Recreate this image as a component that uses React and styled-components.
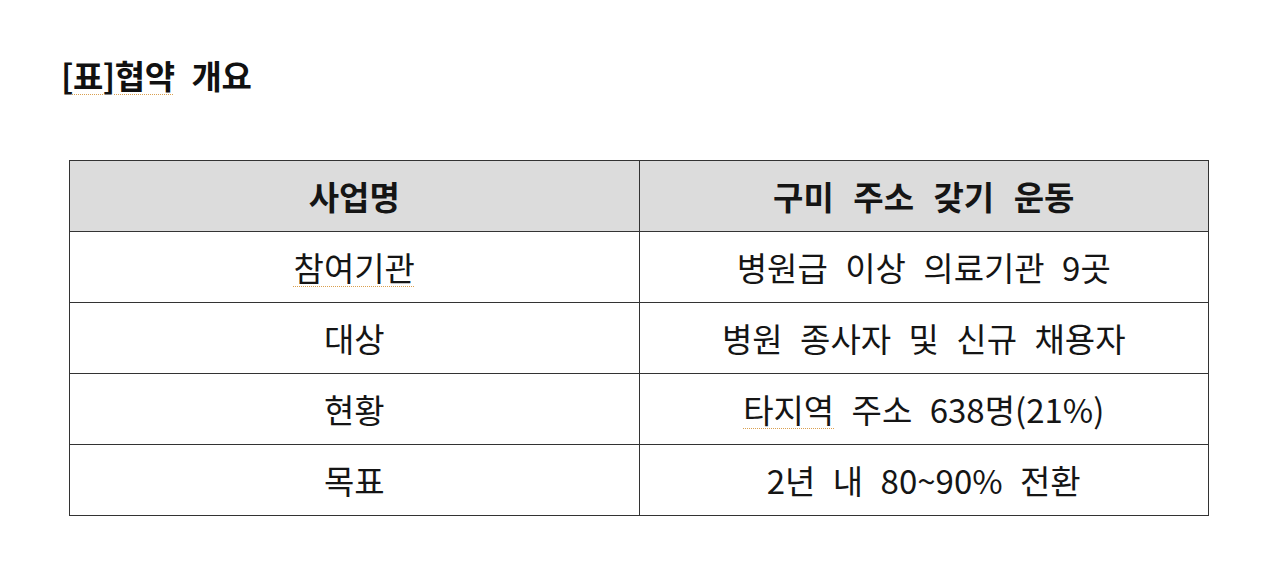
import React from "react";
import styled, { createGlobalStyle } from "styled-components";

const Global = createGlobalStyle`
  html, body {
    margin: 0;
    padding: 0;
    background: #fff;
  }
  body {
    font-family: "Noto Sans CJK KR", "Noto Sans", sans-serif;
    color: #111;
  }
`;

const Page = styled.div`
  width: 1280px;
  height: 575px;
  box-sizing: border-box;
  padding: 52px 0 0 61px;
`;

const Title = styled.h2`
  margin: 0;
  font-size: 33px;
  font-weight: 700;
  line-height: 46px;
  word-spacing: 10px;
  letter-spacing: -0.5px;
`;

const Spell = styled.span`
  text-decoration: underline dotted #d9a050;
  text-underline-offset: 5px;
  text-decoration-thickness: 1px;
`;

const Table = styled.table`
  margin: 62px 0 0 8px;
  width: 1140px;
  border-collapse: collapse;
  table-layout: fixed;
`;

const Cell = styled.td`
  height: 70px;
  padding: 0;
  border: 1px solid #333;
  text-align: center;
  font-size: 33px;
  font-weight: ${(p) => (p.$head ? 700 : 400)};
  background: ${(p) => (p.$head ? "#dcdcdc" : "#fff")};
  word-spacing: ${(p) => (p.$head ? "12px" : "10px")};
  line-height: 1;
  color: #151515;
`;

const rows = [
  [<Spell>참여기관</Spell>, "병원급 이상 의료기관 9곳"],
  ["대상", "병원 종사자 및 신규 채용자"],
  ["현황", <><Spell>타지역</Spell> 주소 638명(21%)</>],
  ["목표", "2년 내 80~90% 전환"],
];

export default function App() {
  return (
    <>
      <Global />
      <Page>
        <Title>
          [<Spell>표]협약</Spell> 개요
        </Title>
        <Table>
          <tbody>
            <tr>
              <Cell $head>사업명</Cell>
              <Cell $head>구미 주소 갖기 운동</Cell>
            </tr>
            {rows.map((r, i) => (
              <tr key={i}>
                <Cell>{r[0]}</Cell>
                <Cell>{r[1]}</Cell>
              </tr>
            ))}
          </tbody>
        </Table>
      </Page>
    </>
  );
}
